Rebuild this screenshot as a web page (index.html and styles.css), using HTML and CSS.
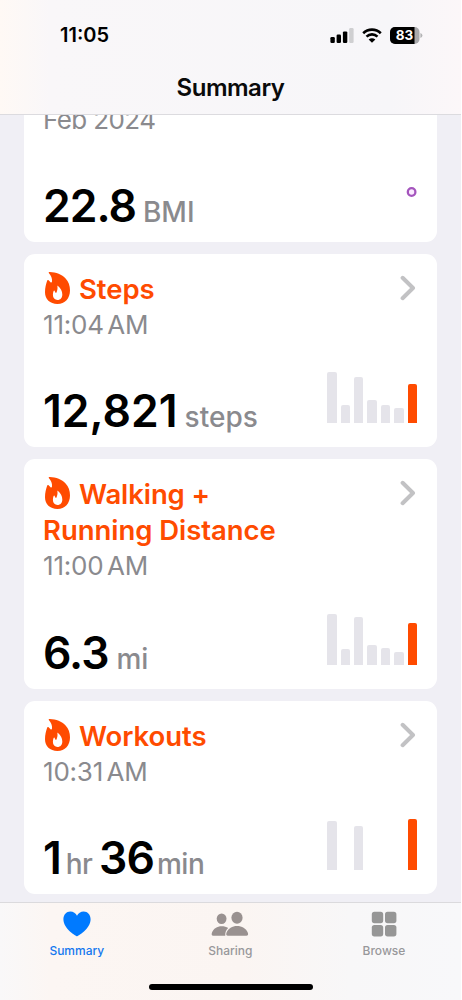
FILE: index.html
```
<!DOCTYPE html>
<html lang="en">
<head>
<meta charset="utf-8">
<title>Summary</title>
<link rel="stylesheet" href="styles.css">
</head>
<body>
<svg class="defs" width="0" height="0">
  <symbol id="flame" viewBox="0 0 25 32">
    <path fill="#ff4b00" fill-rule="evenodd" d="M3.8 0.9C3.4 0.2 4 0 4.8 0C11 0.1 17 2.4 20.6 6.4C23.5 9.6 25 13.6 25 18.2C25 26.2 20 32 12.4 32C5 32 0 27.2 0 20.3C0 15.8 1 12 2.2 8.6C2.5 7.7 3.1 7.8 3.6 8.3L5.8 10.4C6.3 10.8 6.9 10.4 7 9.6C7.4 6.2 6 3.6 3.8 .9ZM12.4 14.2C12.8 16.6 12.3 18.6 11.5 20.5C11.2 21.1 10.7 21.1 10.4 20.5L9.6 18.9C9.3 18.4 8.8 18.5 8.6 19.1C8.2 20.3 7.9 21.4 7.9 22.8C7.9 26.1 9.8 28 12.5 28C15.4 28 17.3 25.9 17.3 22.5C17.3 18.9 15.6 15.8 13 13.9C12.6 13.6 12.3 13.8 12.4 14.2Z"/>
  </symbol>
  <symbol id="chevron" viewBox="0 0 16 26">
    <path d="M2.6 2.8L13 13L2.6 23.2" fill="none" stroke="#c2c2c4" stroke-width="4" stroke-linecap="round" stroke-linejoin="round"/>
  </symbol>
</svg>
<div class="screen">
  <header class="header">
    <div class="status">
      <span class="clock">11:05</span>
      <div class="indicators">
        <svg class="signal" width="24" height="15" viewBox="0 0 24 15"><rect x="0.4" y="9" width="4.4" height="6" rx="1.2"/><rect x="6.6" y="6.6" width="4.4" height="8.4" rx="1.2"/><rect x="12.9" y="3.4" width="4.4" height="11.6" rx="1.2"/><rect x="19.2" y="0" width="4.4" height="15" rx="1.2" fill="#cfcfd1"/></svg>
        <svg class="wifi" width="20" height="15" viewBox="0 0 20 15"><path d="M1.2 5.2A12.7 12.7 0 0 1 18.8 5.2M4.5 8.6A8 8 0 0 1 15.5 8.6" fill="none" stroke="#000" stroke-width="2.6"/><path d="M6.6 11.4Q10 8.9 13.4 11.4L10 14.8Z"/></svg>
        <svg class="battery" width="33" height="17" viewBox="0 0 33 17"><rect x="0" y="0" width="29.5" height="17" rx="5" fill="#a9a9ac"/><path d="M5 0H24.5V17H5A5 5 0 0 1 0 12V5A5 5 0 0 1 5 0Z"/><path d="M30.4 5.9Q32.4 6.8 32.4 8.5T30.4 11.1Z" fill="#b3b3b5"/><text x="14.4" y="13.4" class="charge">83</text></svg>
      </div>
    </div>
    <h1 class="page-title">Summary</h1>
  </header>

  <main class="cards">
    <section class="card">
      <div class="time month">Feb 2024</div>
      <div class="bottom">
        <div class="value"><b class="n-bmi">22.8</b><span class="u-bmi">BMI</span></div>
        <svg class="chart" width="25" height="60" viewBox="0 0 25 60"><circle cx="19.6" cy="10" r="3.8" fill="#fbeaff" stroke="#a455bd" stroke-width="2.3"/></svg>
      </div>
    </section>

    <section class="card">
      <svg class="chevron"><use href="#chevron"/></svg>
      <h2 class="title"><svg class="flame"><use href="#flame"/></svg><span>Steps</span></h2>
      <div class="time">11:04<i></i>AM</div>
      <div class="bottom">
        <div class="value"><b class="n-steps">12,821</b><span class="u-steps">steps</span></div>
        <div class="bars"><i style="height:51.5px"></i><i style="height:18px"></i><i style="height:46.5px"></i><i style="height:23.5px"></i><i style="height:18.5px"></i><i style="height:15px"></i><i class="now" style="height:39.5px"></i></div>
      </div>
    </section>

    <section class="card tall">
      <svg class="chevron"><use href="#chevron"/></svg>
      <h2 class="title"><svg class="flame"><use href="#flame"/></svg><span class="t-walk">Walking +</span><br><span>Running Distance</span></h2>
      <div class="time">11:00<i></i>AM</div>
      <div class="bottom">
        <div class="value"><b class="n-mi">6.3</b><span class="u-mi">mi</span></div>
        <div class="bars"><i style="height:51.5px"></i><i style="height:16.5px"></i><i style="height:48.5px"></i><i style="height:20.5px"></i><i style="height:17px"></i><i style="height:13px"></i><i class="now" style="height:42px"></i></div>
      </div>
    </section>

    <section class="card">
      <svg class="chevron"><use href="#chevron"/></svg>
      <h2 class="title"><svg class="flame"><use href="#flame"/></svg><span>Workouts</span></h2>
      <div class="time">10:31<i></i>AM</div>
      <div class="bottom">
        <div class="value"><b class="n-hr">1</b><span class="u-hr">hr</span><b class="n-min">36</b><span class="u-min">min</span></div>
        <div class="bars"><i style="height:49.5px"></i><i style="height:0"></i><i style="height:44.5px"></i><i style="height:0"></i><i style="height:0"></i><i style="height:0"></i><i class="now" style="height:51.5px"></i></div>
      </div>
    </section>
  </main>

  <nav class="tabs">
    <div class="tab active"><svg width="28" height="26" viewBox="0 0 28 26"><path fill="#007aff" d="M14 25.2C13.4 25.2 0.4 18 0.4 8.2C0.4 3.6 3.4 0.4 7.3 0.4C10.3 0.4 12.8 2 14 4.8C15.2 2 17.7 0.4 20.7 0.4C24.6 0.4 27.6 3.6 27.6 8.2C27.6 18 14.6 25.2 14 25.2Z"/></svg><span>Summary</span></div>
    <div class="tab sharing"><svg width="38" height="26" viewBox="0 0 38 26"><g fill="#999190"><ellipse cx="10.6" cy="7.8" rx="4.9" ry="5.3"/><path d="M2.4 24.8C.4 24.8 .4 23.2 1 21.5C2.4 17.5 6.2 15.2 10.6 15.2C13.2 15.2 15.4 15.8 17.2 17.1C15.2 18.9 14 21.5 14.3 24.8Z"/><ellipse cx="26" cy="6.8" rx="5.6" ry="6"/><path d="M17 24.8C15 24.8 14.9 23.3 15.6 21.5C17.2 17.5 21.3 15 26 15C31 15 35 17.5 36.7 21.5C37.5 23.4 37.2 24.8 35.2 24.8Z"/></g></svg><span>Sharing</span></div>
    <div class="tab"><svg width="26" height="26" viewBox="0 0 26 26"><g fill="#969696"><rect x="0.8" y="0.8" width="11.4" height="11.4" rx="2.6"/><rect x="14" y="0.8" width="11.4" height="11.4" rx="2.6"/><rect x="0.8" y="14" width="11.4" height="11.4" rx="2.6"/><rect x="14" y="14" width="11.4" height="11.4" rx="2.6"/></g></svg><span>Browse</span></div>
    <div class="home"></div>
  </nav>
</div>
</body>
</html>
```
FILE: styles.css
```
* { box-sizing: border-box; }
body { margin: 0; background: #fff; font-family: Inter, "Liberation Sans", sans-serif; }
.defs { position: absolute; }
.screen { width: 461px; height: 1000px; display: flex; flex-direction: column; background: #f0eff5; overflow: hidden; }

.header { height: 115px; flex: none; border-bottom: 1px solid #dcdbdf; background: linear-gradient(90deg, #fff9f5 0, #f9f7f9 50px, #f7f6f9 390px, #fcf7f9 461px); }
.status { display: flex; justify-content: space-between; align-items: center; height: 70px; padding: 0 38px 0 60px; }
.clock { font-size: 20px; font-weight: 600; letter-spacing: 0; }
.indicators { display: flex; align-items: center; gap: 8px; }
.charge { font-size: 13.5px; font-weight: 700; fill: #fff; text-anchor: middle; }
.page-title { margin: 1px 0 0; text-align: center; font-size: 24px; line-height: 34px; font-weight: 600; letter-spacing: -0.5px; color: #0a0a0a; }

.cards { flex: none; height: 787px; overflow: hidden; display: flex; flex-direction: column; justify-content: flex-end; gap: 12px; padding: 0 24px 8px; }
.card { position: relative; flex: none; height: 193px; background: #fff; border-radius: 11px; padding: 17px 20px 0 19px; display: flex; flex-direction: column; }
.tall { height: 230px; }
.chevron { position: absolute; right: 21px; top: 21px; width: 16px; height: 26px; }
.title { margin: 0; font-size: 27.5px; line-height: 36px; font-weight: 600; letter-spacing: -0.05px; color: #ff4b00; }
.t-walk { letter-spacing: -0.1px; }
.flame { width: 25px; height: 32px; margin: 0 9px 0 2px; vertical-align: -5px; }
.time { font-size: 26px; line-height: 36px; letter-spacing: -0.2px; color: #8a8a8e; }
.time i { display: inline-block; width: 3.5px; }
.month { margin-top: 36px; letter-spacing: -0.6px; }
.bottom { margin-top: auto; display: flex; justify-content: space-between; align-items: flex-end; }
.value { display: flex; align-items: baseline; line-height: 54px; padding-bottom: 3px; color: #8a8a8e; font-size: 28px; font-weight: 550; }
.value b { font-size: 44.5px; font-weight: 600; color: #000; }
.value .n-bmi, .value .n-mi { letter-spacing: -1px; }
.u-bmi { margin-left: 7px; }
.u-mi { margin-left: 8px; }
.u-steps { margin-left: 7px; }
.u-hr { margin-left: 4px; letter-spacing: -0.7px; }
.value .n-min { margin-left: 7px; letter-spacing: -1px; }
.u-min { margin-left: 3px; letter-spacing: -0.4px; }
.bars { height: 52px; display: flex; align-items: flex-end; gap: 4px; margin-bottom: 23.6px; }
.bars i { width: 9.4px; background: #e5e4ea; border-radius: 2px 2px 0 0; }
.bars .now { background: #ff4b00; }

.tabs { position: relative; flex: none; height: 98px; border-top: 1px solid #dbdadd; display: flex; background: linear-gradient(90deg, #f9f8f9 0, #fcf6f3 50px, #fbf5f2 240px, #f8f7f8 350px, #f8f8fa 461px); }
.tab { width: 153.6px; display: flex; flex-direction: column; align-items: center; padding-top: 8px; font-size: 12px; font-weight: 500; line-height: 16px; color: #98989b; }
.tab span { margin-top: 6px; }
.active { color: #1578ef; }
.home { position: absolute; left: 149px; bottom: 10px; width: 164px; height: 6px; border-radius: 3px; background: #000; }
```
